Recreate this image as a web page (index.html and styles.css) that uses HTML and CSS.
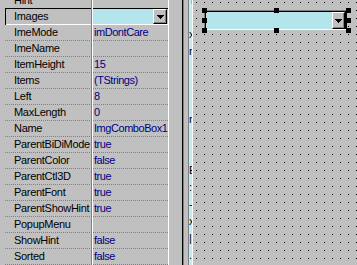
FILE: index.html
```html
<!DOCTYPE html>
<html>
<head>
<meta charset="utf-8">
<link rel="stylesheet" href="styles.css">
</head>
<body>
<div class="screen">
  <div class="inspector">
    <div class="grid">
      <div class="row pre"><div class="name">Hint</div><div class="value"></div></div>
      <div class="row sel">
        <div class="name">Images</div>
        <div class="value edit">
          <div class="edit-field"></div>
          <div class="btn"><svg width="7" height="4" viewBox="0 0 7 4" shape-rendering="crispEdges"><path d="M0 0h7v1H0zM1 1h5v1H1zM2 2h3v1H2zM3 3h1v1H3z" fill="#000"/></svg></div>
        </div>
      </div>
      <div class="row"><div class="name">ImeMode</div><div class="value">imDontCare</div></div>
      <div class="row"><div class="name">ImeName</div><div class="value"></div></div>
      <div class="row"><div class="name">ItemHeight</div><div class="value">15</div></div>
      <div class="row"><div class="name">Items</div><div class="value">(TStrings)</div></div>
      <div class="row"><div class="name">Left</div><div class="value">8</div></div>
      <div class="row"><div class="name">MaxLength</div><div class="value">0</div></div>
      <div class="row"><div class="name">Name</div><div class="value">ImgComboBox1</div></div>
      <div class="row"><div class="name">ParentBiDiMode</div><div class="value">true</div></div>
      <div class="row"><div class="name">ParentColor</div><div class="value">false</div></div>
      <div class="row"><div class="name">ParentCtl3D</div><div class="value">true</div></div>
      <div class="row"><div class="name">ParentFont</div><div class="value">true</div></div>
      <div class="row"><div class="name">ParentShowHint</div><div class="value">true</div></div>
      <div class="row"><div class="name">PopupMenu</div><div class="value"></div></div>
      <div class="row"><div class="name">ShowHint</div><div class="value">false</div></div>
      <div class="row"><div class="name">Sorted</div><div class="value">false</div></div>
    </div>
  </div>
  <div class="gap"></div>
  <div class="frame"></div>
  <div class="gap2"></div>
  <div class="strip">
    <div class="behind">
      <div>T</div><div>&nbsp;</div><div>x</div><div>r</div><div>&nbsp;</div><div>&nbsp;</div><div>&nbsp;</div><div>r</div><div>&nbsp;</div><div>&nbsp;</div><div>E</div><div>:</div><div>-</div><div>x</div><div>|</div><div>.</div>
    </div>
  </div>
  <div class="form">
    <div class="combo">
      <div class="combo-in">
        <div class="combo-field"></div>
        <div class="btn btn-form"><svg width="7" height="4" viewBox="0 0 7 4" shape-rendering="crispEdges"><path d="M0 0h7v1H0zM1 1h5v1H1zM2 2h3v1H2zM3 3h1v1H3z" fill="#000"/></svg></div>
      </div>
    </div>
    <div class="handle h-tl"></div>
    <div class="handle h-tc"></div>
    <div class="handle h-tr"></div>
    <div class="handle h-ml"></div>
    <div class="handle h-mr"></div>
    <div class="handle h-bl"></div>
    <div class="handle h-bc"></div>
    <div class="handle h-br"></div>
  </div>
</div>
</body>
</html>
```
FILE: styles.css
```css
* { box-sizing: border-box; }
html, body { margin: 0; padding: 0; }
body {
  width: 357px;
  height: 265px;
  overflow: hidden;
  background: #c0c0c0;
  font-family: "Liberation Sans", Arial, sans-serif;
  font-size: 11px;
}
.screen { display: flex; height: 265px; }

.inspector {
  width: 169px;
  flex: none;
  padding-left: 5px;
  border-right: 1px solid #fff;
  overflow: hidden;
}
.grid { margin-top: -7px; }
.row {
  display: flex;
  height: 16px;
  background-image: linear-gradient(to right, #808080 50%, transparent 50%);
  background-size: 2px 1px;
  background-repeat: repeat-x;
  background-position: 0 100%;
}
.row.pre {
  background-image: linear-gradient(#000, #000);
  background-size: 100% 1px;
}
.row.sel {
  background-image: linear-gradient(#fff, #fff);
  background-size: 100% 1px;
}
.row.sel .name { box-shadow: inset 1px 0 #000; }
.name {
  width: 87px;
  flex: none;
  padding-left: 9px;
  border-right: 1px solid #808080;
  line-height: 15px;
  white-space: nowrap;
  overflow: hidden;
  color: #000;
  letter-spacing: -0.3px;
}
.value {
  flex: 1;
  min-width: 0;
  border-left: 1px solid #fff;
  padding-left: 1px;
  line-height: 15px;
  color: #000080;
  white-space: nowrap;
  overflow: hidden;
  letter-spacing: -0.45px;
}
.value.edit {
  display: flex;
  padding-left: 0;
  height: 15px;
  padding-right: 1px;
}
.edit-field { flex: 1; background: #b4e4ec; }
.btn {
  width: 14px;
  flex: none;
  background: #c0c0c0;
  border-top: 1px solid #fff;
  border-left: 1px solid #fff;
  border-right: 1px solid #000;
  border-bottom: 1px solid #000;
  box-shadow: inset -1px -1px #808080;
  display: flex;
  align-items: center;
  justify-content: center;
}
.btn svg { display: block; }

.gap { width: 13px; flex: none; }
.frame {
  width: 2px;
  flex: none;
  border-left: 1px solid #000;
  border-right: 1px solid #808080;
}
.gap2 { width: 4px; flex: none; }
.strip {
  width: 5px;
  flex: none;
  border-left: 1px solid #808080;
  border-right: 1px solid #fff;
  background: #c4ecf0;
  overflow: hidden;
}
.behind {
  margin-top: -8px;
  font-size: 11px;
  line-height: 17px;
  color: #000;
  white-space: nowrap;
}

.form {
  flex: 1;
  position: relative;
  background-color: #c0c0c0;
  background-image: conic-gradient(from 0deg at 1px 1px, transparent 0deg 270deg, #000 270deg 360deg);
  background-size: 8px 8px;
  background-position: 3px 2px;
}
.combo {
  position: absolute;
  left: 11px;
  top: 10px;
  width: 143px;
  height: 20px;
  border-top: 1px solid #808080;
  border-left: 1px solid #808080;
  border-right: 1px solid #000;
  border-bottom: 1px solid #fff;
  background: #b4e4ec;
}
.combo-in {
  display: flex;
  height: 100%;
  border-top: 1px solid #000;
  border-left: 1px solid #000;
  border-right: 1px solid #000;
}
.combo-field { flex: 1; background: #b4e4ec; }
.btn-form { width: 13px; }
.handle {
  position: absolute;
  width: 5px;
  height: 5px;
  background: #000;
}
.h-tl { left: 9px; top: 8px; }
.h-tc { left: 81px; top: 8px; }
.h-tr { left: 153px; top: 8px; }
.h-ml { left: 9px; top: 18px; }
.h-mr { left: 153px; top: 18px; }
.h-bl { left: 9px; top: 28px; }
.h-bc { left: 81px; top: 28px; }
.h-br { left: 153px; top: 28px; }
```
